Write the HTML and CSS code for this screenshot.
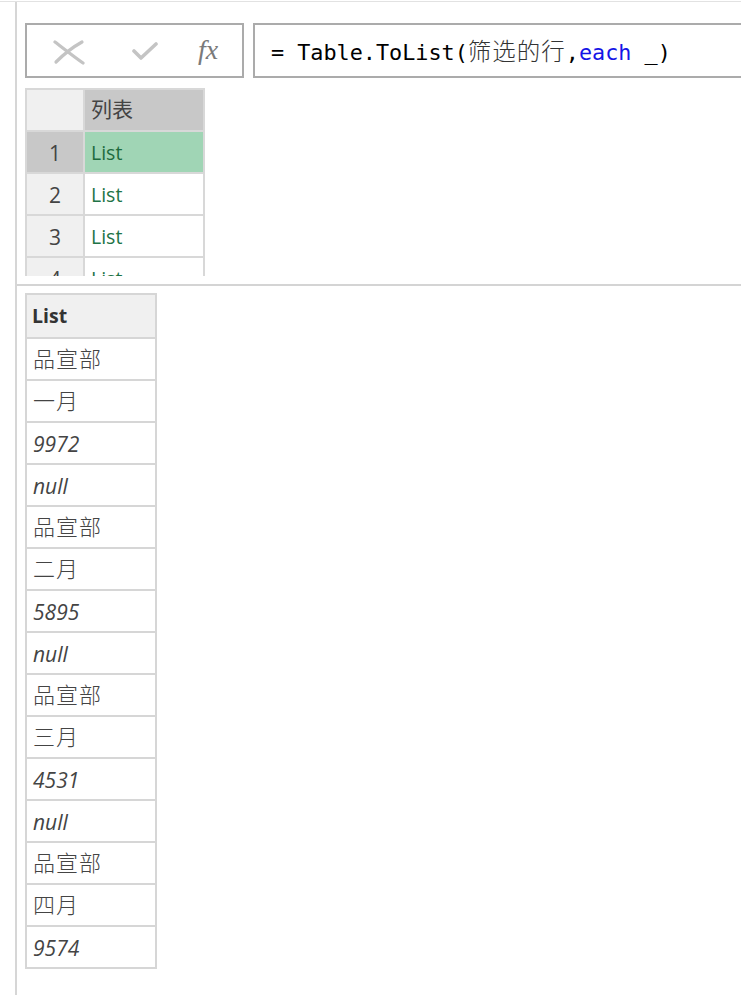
FILE: index.html
```html
<!DOCTYPE html>
<html lang="zh">
<head>
<meta charset="utf-8">
<link rel="stylesheet" href="styles.css">
</head>
<body>
<div class="topline"></div>
<div class="main">
  <div class="formula-bar">
    <div class="tools">
      <svg class="ico-x" width="32" height="26" viewBox="0 0 32 26"><path d="M2 3 C10 9 20 17 30 24" stroke="#c4c4c4" stroke-width="3.2" fill="none" stroke-linecap="round"/><path d="M29 3 C20 8 11 15 3 23" stroke="#c4c4c4" stroke-width="3.2" fill="none" stroke-linecap="round"/></svg>
      <svg class="ico-check" width="26" height="20" viewBox="0 0 26 20"><path d="M2 10 L9 17 L24 3" stroke="#c4c4c4" stroke-width="3.6" fill="none" stroke-linecap="round" stroke-linejoin="round"/></svg>
      <span class="fx">fx</span>
    </div>
    <div class="formula">= Table.ToList(<span class="cjk">筛选的行</span>,<span class="kw">each</span> _)</div>
  </div>
  <div class="top-area">
    <div class="grid-top">
      <div class="corner"></div><div class="th">列表</div>
      <div class="rn sel">1</div><div class="cell selcell">List</div>
      <div class="rn">2</div><div class="cell">List</div>
      <div class="rn">3</div><div class="cell">List</div>
      <div class="rn">4</div><div class="cell">List</div>
    </div>
  </div>
  <div class="sep"></div>
  <div class="grid-list">
    <div class="lh">List</div>
    <div class="lc zh">品宣部</div>
    <div class="lc zh">一月</div>
    <div class="lc it">9972</div>
    <div class="lc it">null</div>
    <div class="lc zh">品宣部</div>
    <div class="lc zh">二月</div>
    <div class="lc it">5895</div>
    <div class="lc it">null</div>
    <div class="lc zh">品宣部</div>
    <div class="lc zh">三月</div>
    <div class="lc it">4531</div>
    <div class="lc it">null</div>
    <div class="lc zh">品宣部</div>
    <div class="lc zh">四月</div>
    <div class="lc it">9574</div>
  </div>
</div>
</body>
</html>
```
FILE: styles.css
```css
html, body {
  margin: 0;
  padding: 0;
  background: #fff;
  overflow: hidden;
}
body {
  font-family: "Open Sans", "Noto Sans CJK SC", sans-serif;
  color: #444;
  height: 995px;
  padding-top: 1px;
  box-sizing: border-box;
}
.topline {
  height: 1px;
  background: #e2e2e2;
}
.main {
  margin-left: 15px;
  border-left: 2px solid #d6d6d6;
  height: 993px;
}
.formula-bar {
  display: flex;
  gap: 9px;
  padding: 21px 0 0 8px;
  margin-right: -20px;
}
.tools {
  width: 215px;
  height: 51px;
  border: 2px solid #ababab;
  display: flex;
  align-items: center;
  flex: none;
}
.ico-x { margin-left: 26px; margin-top: 2px; }
.ico-check { margin-left: 47px; margin-top: 1px; }
.fx {
  margin-left: 40px;
  font-family: "Liberation Serif", "DejaVu Serif", serif;
  font-style: italic;
  font-size: 28px;
  color: #7a7a7a;
  margin-top: -2px;
}
.formula {
  flex: 1;
  height: 51px;
  border: 2px solid #ababab;
  font-family: "DejaVu Sans Mono", "Liberation Mono", monospace;
  font-size: 21.8px;
  color: #000;
  line-height: 51px;
  padding-left: 16px;
  white-space: nowrap;
}
.formula .cjk {
  font-family: "Noto Sans CJK SC", sans-serif;
  font-size: 23.5px;
  color: #333;
  font-weight: 300;
  letter-spacing: 1px;
}
.formula .kw { color: #1414e6; }
.top-area {
  margin-top: 10px;
  padding-left: 8px;
  height: 188px;
  overflow: hidden;
}
.grid-top {
  display: grid;
  grid-template-columns: 56px 118px;
  grid-auto-rows: 40px;
  gap: 2px;
  padding: 2px;
  width: max-content;
  background: #d8d8d8;
}
.corner { background: #f0f0f0; }
.th {
  background: #c8c8c8;
  font-family: "Noto Sans CJK SC", sans-serif;
  font-size: 21px;
  color: #444;
  padding-left: 6px;
  line-height: 36px;
}
.rn {
  background: #f0f0f0;
  text-align: center;
  font-size: 21px;
  line-height: 42px;
  color: #444;
}
.rn.sel { background: #c8c8c8; }
.cell {
  background: #fff;
  color: #217346;
  font-size: 19.5px;
  padding-left: 6px;
  line-height: 42px;
}
.cell.selcell { background: #a0d5b5; color: #1d6b3e; }
.sep {
  height: 2px;
  background: #d4d4d4;
  margin-top: 8px;
}
.grid-list {
  display: grid;
  grid-template-columns: 128px;
  grid-template-rows: 42px;
  grid-auto-rows: 40px;
  gap: 2px;
  padding: 2px;
  margin-top: 7px;
  margin-left: 8px;
  width: max-content;
  background: #d6d6d6;
}
.lh {
  background: #f0f0f0;
  font-weight: 700;
  font-size: 19.5px;
  color: #333;
  padding-left: 5px;
  line-height: 42px;
}
.lc {
  background: #fff;
  padding-left: 6px;
  line-height: 40px;
  color: #444;
}
.lc.zh {
  font-family: "Noto Sans CJK SC", sans-serif;
  font-size: 22px;
  font-weight: 300;
  letter-spacing: 1px;
  line-height: 36px;
}
.lc.it {
  font-style: italic;
  font-size: 21px;
  line-height: 42px;
}
```
